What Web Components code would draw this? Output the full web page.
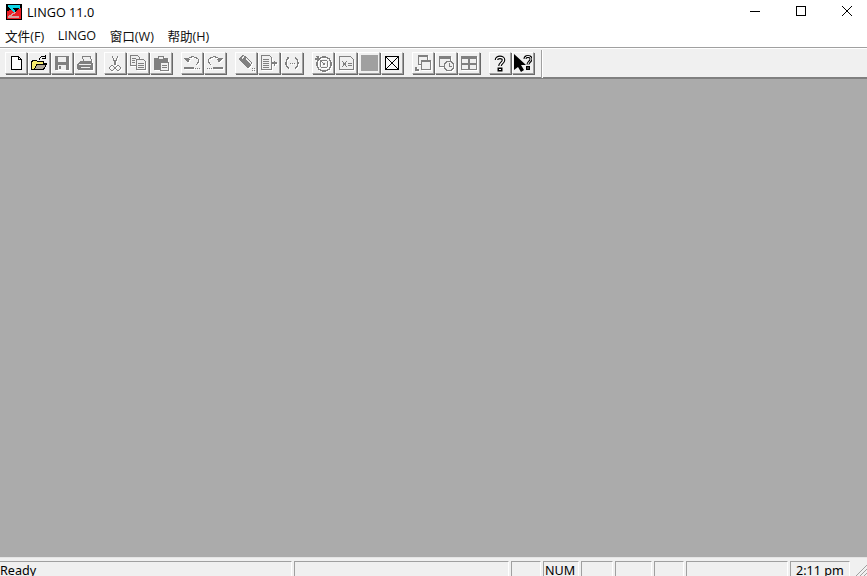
<!DOCTYPE html>
<html>
<head>
<meta charset="utf-8">
<title>LINGO 11.0</title>
<style>
html, body { margin: 0; height: 100%; }
body { width: 867px; height: 576px; overflow: hidden; display: flex; flex-direction: column; font-family: "Liberation Sans", "Noto Sans CJK SC", sans-serif; }
</style>
</head>
<body>
<app-titlebar>LINGO 11.0</app-titlebar>
<app-menubar>
  <span>文件(F)</span><span>LINGO</span><span>窗口(W)</span><span>帮助(H)</span>
</app-menubar>
<app-toolbar></app-toolbar>
<app-workspace></app-workspace>
<app-statusbar></app-statusbar>

<script>
const titleTemplate = document.createElement('template');
titleTemplate.innerHTML = `
<style>
:host { display: flex; align-items: center; height: 24px; background: #fff; flex: none; font-family: "Open Sans", "Liberation Sans", sans-serif; font-size: 12.7px; color: #000; }
.logo { width: 16px; height: 16px; margin: 0 5px 0 6px; flex: none; }
.name { flex: 1; }
.win { display: flex; }
.win svg { width: 46px; height: 24px; display: block; }
</style>
<svg class="logo" viewBox="0 0 16 16" shape-rendering="crispEdges">
  <rect width="16" height="16" fill="#000"/>
  <path d="M1 7l4-1 4 2 5-4h1v11H1z" fill="#ec1c24"/>
  <path d="M2 1h11v3H6l3 3-1 1-6-5z" fill="#12d6e6"/>
  <path d="M9 8l1 1-5 3h8v2H2v-2z" fill="#d8a0a0"/>
  <path d="M13 1h1v4h-1z" fill="#12d6e6"/>
</svg>
<span class="name"><slot></slot></span>
<div class="win">
  <svg viewBox="0 0 46 24"><path d="M21 11.5h10" stroke="#000" stroke-width="1" fill="none"/></svg>
  <svg viewBox="0 0 46 24"><rect x="21.5" y="6.5" width="9" height="9" stroke="#000" fill="none"/></svg>
  <svg viewBox="0 0 46 24"><path d="M21 6l10 10M31 6L21 16" stroke="#000" fill="none"/></svg>
</div>`;

class AppTitlebar extends HTMLElement {
  constructor() {
    super();
    this.attachShadow({mode: 'open'}).appendChild(titleTemplate.content.cloneNode(true));
  }
}
customElements.define('app-titlebar', AppTitlebar);

const menuTemplate = document.createElement('template');
menuTemplate.innerHTML = `
<style>
:host { display: flex; align-items: center; gap: 13.5px; height: 23px; padding: 0 5px 0; box-sizing: border-box; background: #fff; flex: none; font-family: "Open Sans", "Noto Sans CJK SC", sans-serif; font-size: 12.6px; color: #111; }
</style>
<slot></slot>`;

class AppMenubar extends HTMLElement {
  constructor() {
    super();
    this.attachShadow({mode: 'open'}).appendChild(menuTemplate.content.cloneNode(true));
  }
}
customElements.define('app-menubar', AppMenubar);

// toolbar icons on an 18x18 box. dim ones get the old embossed disabled look
const G = '#808080';
const L = '#f0f0f0';
const icons = {
  new: {d: `<path d="M4.5 2.5h7l3 3v10h-10zM11.5 2.5v3h3" fill="#fff" stroke="#000"/>`},
  open: {d: `<path d="M1.5 8.5v7h12l3-6h-3v-2h-6l-1-1h-4z" fill="#f6ea6c" stroke="#000"/><path d="M4.5 15.5l2-5h10l-3 5z" fill="#b0a898" stroke="#000"/><path d="M9 6c1-3 3-4 6-3M15 1v3h-3" fill="none" stroke="#000"/>`},
  save: {dim: 1, d: `<path d="M2 2h14v14H2z" fill="${G}"/><path d="M5 3h8v5H5z" fill="${L}"/><path d="M5 11h8v5H5z" fill="${L}"/><path d="M6 12h2v3H6z" fill="${G}"/>`},
  print: {dim: 1, d: `<path d="M6.5 2.5h8l1 5h-8z" fill="${L}" stroke="${G}"/><path d="M1 10l3-3h12l1 3v5l-1 1H2l-1-1z" fill="${G}"/><path d="M3 10h12v1H3zM5 13h9v1H5z" fill="${L}"/>`},
  cut: {dim: 1, d: `<path d="M6 2l4 9M12 2L8 11" stroke="${G}" fill="none"/><circle cx="6" cy="14" r="2.3" fill="none" stroke="${G}"/><circle cx="12" cy="14" r="2.3" fill="none" stroke="${G}"/>`},
  copy: {dim: 1, d: `<path d="M1.5 1.5h7l2 2v8h-9z" fill="${L}" stroke="${G}"/><path d="M7.5 5.5h7l2 2v8h-9z" fill="${L}" stroke="${G}"/><path d="M3 4h4M3 6h3M3 8h3M9 9h6M9 11h6M9 13h6" stroke="${G}"/>`},
  paste: {dim: 1, d: `<path d="M2 4h4V2h6v2h4v12H2z" fill="${G}"/><path d="M7 3h4v2H7z" fill="${L}"/><path d="M8.5 8.5h8v8h-8z" fill="${L}" stroke="${G}"/><path d="M10 11h5M10 13h5" stroke="${G}"/>`},
  undo: {dim: 1, d: `<path d="M4 6C6 2 12 2 15 5 16 7 15 10 13 11" fill="none" stroke="${G}"/><path d="M1 4l6 1-2 4z" fill="${G}"/><path d="M1 13h10v2H1z" fill="${G}"/><path d="M12 14h1M14 14h1M16 14h1" stroke="${G}"/>`},
  redo: {dim: 1, d: `<path d="M14 6C12 2 6 2 3 5 2 7 3 10 5 11" fill="none" stroke="${G}"/><path d="M17 4l-6 1 2 4z" fill="${G}"/><path d="M7 13h10v2H7z" fill="${G}"/><path d="M1 14h1M3 14h1M5 14h1" stroke="${G}"/>`},
  find: {dim: 1, d: `<path d="M1 5l4-4 3 1 7 7-1 3-3 2-7-6z" fill="${G}"/><path d="M4 4l2-2 1 1-2 2zM8 5l1-1 5 5-1 1z" fill="${L}"/><path d="M15 14h1M17 14h1M15 16h1M17 16h1" stroke="${G}"/>`},
  next: {dim: 1, d: `<path d="M1.5 1.5h8l2 2v12h-10z" fill="${L}" stroke="${G}"/><path d="M3 5h6M3 7h6M3 9h6M3 11h6M3 13h6" stroke="${G}"/><path d="M12 9h5M14.5 6.5v5" stroke="${G}" stroke-width="1.4"/>`},
  match: {dim: 1, d: `<path d="M6 3C2 6 2 12 6 15M12 3c4 3 4 9 0 12" fill="none" stroke="${G}" stroke-width="1.3"/><path d="M7 9h1M9 9h1M11 9h1" stroke="${G}"/>`},
  solve: {dim: 1, d: `<circle cx="10" cy="10" r="7.2" fill="none" stroke="${G}" stroke-width="1.3"/><circle cx="10" cy="10" r="4" fill="none" stroke="${G}"/><circle cx="10" cy="10" r="1.5" fill="${G}"/><path d="M2 2l7 7M1 5h3V2" stroke="${G}" fill="none" stroke-width="1.4"/>`},
  matrix: {dim: 1, d: `<path d="M2.5 2.5h11l3 3v10h-14z" fill="${L}" stroke="${G}"/><path d="M5 7l5 6M10 7l-5 6M11 9h4M11 11h4" stroke="${G}" fill="none"/>`},
  stop: {dim: 1, bare: 1, d: `<rect x="1" y="1" width="17" height="16" fill="#a0a0a0"/>`},
  close: {d: `<rect x="2.5" y="2.5" width="13" height="13" fill="#f8f8f8" stroke="#000"/><path d="M3 3l12 12M15 3L3 15" stroke="#000" fill="none"/>`},
  cascade: {dim: 1, d: `<path d="M4.5 1.5h9v9h-9z" fill="${L}" stroke="${G}"/><path d="M4 1h10v2H4z" fill="${G}"/><path d="M7.5 6.5h9v9h-9z" fill="${L}" stroke="${G}"/><path d="M7 6h10v2H7z" fill="${G}"/><path d="M1 13h2v2h2v2H1z" fill="${G}"/>`},
  tile: {dim: 1, d: `<path d="M2.5 2.5h11v10h-11z" fill="${L}" stroke="${G}"/><path d="M2 2h12v3H2z" fill="${G}"/><circle cx="12" cy="12" r="4.6" fill="${L}" stroke="${G}" stroke-width="1.3"/><path d="M12 9v3h3" stroke="${G}" fill="none"/>`},
  arrange: {dim: 1, d: `<path d="M1 2h16v14H1z" fill="${G}"/><path d="M2 5h6v4H2zM10 5h6v4h-6zM2 11h6v4H2zM10 11h6v4h-6z" fill="${L}"/>`},
  help: {soft: 1, d: `<path d="M5.5 6C5.5 2.5 12.5 2.5 12.5 6 12.5 9 9 9 9 12" fill="none" stroke="#000" stroke-width="3.6"/><path d="M5.5 6C5.5 2.5 12.5 2.5 12.5 6 12.5 9 9 9 9 12" fill="none" stroke="#fff" stroke-width="1.4"/><rect x="6.5" y="13.5" width="5" height="4" fill="#000"/><rect x="8" y="15" width="2" height="1" fill="#fff"/>`},
  helpcur: {soft: 1, d: `<path d="M0 0v16l4-3 3 5 3-2-3-5h5z" fill="#000"/><path d="M11 5C11 1.5 17 1.5 17 5 17 7.5 14 8 14 10.5" fill="none" stroke="#000" stroke-width="3"/><path d="M11 5C11 1.5 17 1.5 17 5 17 7.5 14 8 14 10.5" fill="none" stroke="#fff" stroke-width="1"/><rect x="12" y="12" width="4" height="4" fill="#000"/><rect x="13.5" y="13.5" width="1" height="1" fill="#fff"/>`}
};

const toolGroups = [
  ['new', 'open', 'save', 'print'],
  ['cut', 'copy', 'paste'],
  ['undo', 'redo'],
  ['find', 'next', 'match'],
  ['solve', 'matrix', 'stop', 'close'],
  ['cascade', 'tile', 'arrange'],
  ['help', 'helpcur']
];

const toolbarTemplate = document.createElement('template');
toolbarTemplate.innerHTML = `
<style>
:host { display: flex; align-items: flex-start; height: 32px; box-sizing: border-box; flex: none; background: #f0f0f0; border-top: 1px solid #a0a0a0; border-bottom: 2px solid #808080; padding: 4px 0 0 5px; box-shadow: inset 0 1px 0 #fff; }
.groups { display: flex; gap: 9px; }
.group { display: flex; gap: 1px; }
.group:first-child { margin-right: -1px; }
.sep { width: 1px; height: 28px; margin: -2px 0 0 7px; background: #a0a0a0; border-right: 1px solid #fff; }
</style>
<div class="groups"></div>
<div class="sep"></div>`;

class ToolButton extends HTMLElement {
  connectedCallback() {
    if (this.shadowRoot) return;
    const icon = icons[this.getAttribute('icon')];
    const root = this.attachShadow({mode: 'open'});
    root.innerHTML = `
<style>
:host { display: flex; align-items: center; justify-content: center; width: 22px; height: 22px; box-sizing: border-box; background: #f0f0f0; border-top: 1px solid #fff; border-left: 1px solid #fff; border-right: 1px solid #a0a0a0; border-bottom: 1px solid #a0a0a0; box-shadow: 1px 1px 0 #696969; }
svg { width: 18px; height: 18px; display: block; flex: none; }
.dim { filter: drop-shadow(1px 1px 0 #fff); }
</style>
<svg class="${icon.dim && !icon.bare ? 'dim' : ''}" viewBox="0 0 18 18" ${icon.soft ? '' : 'shape-rendering="crispEdges"'}>${icon.d}</svg>`;
  }
}
customElements.define('tool-button', ToolButton);

class AppToolbar extends HTMLElement {
  constructor() {
    super();
    const root = this.attachShadow({mode: 'open'});
    root.appendChild(toolbarTemplate.content.cloneNode(true));
    const groups = root.querySelector('.groups');
    toolGroups.forEach((names) => {
      const group = document.createElement('div');
      group.className = 'group';
      names.forEach((name) => {
        const btn = document.createElement('tool-button');
        btn.setAttribute('icon', name);
        group.appendChild(btn);
      });
      groups.appendChild(group);
    });
  }
}
customElements.define('app-toolbar', AppToolbar);

class AppWorkspace extends HTMLElement {
  constructor() {
    super();
    this.attachShadow({mode: 'open'}).innerHTML = `
<style>:host { display: block; flex: 1; background: #ababab; }</style>`;
  }
}
customElements.define('app-workspace', AppWorkspace);

const statusPanes = [
  {w: 292, text: 'Ready', flat: true},
  {w: 215}, {w: 30}, {w: 36, text: 'NUM'}, {w: 32}, {w: 37}, {w: 30}, {w: 102},
  {w: 60, text: '2:11 pm', pad: 5}
];

class AppStatusbar extends HTMLElement {
  constructor() {
    super();
    const root = this.attachShadow({mode: 'open'});
    const panes = statusPanes.map((p) =>
      `<div class="pane${p.flat ? ' flat' : ''}" style="width:${p.w}px;padding-left:${p.pad || 1}px">${p.text || ''}</div>`).join('');
    root.innerHTML = `
<style>
:host { display: flex; gap: 2px; height: 19px; box-sizing: border-box; flex: none; background: #f0f0f0; padding-top: 3px; border-top: 1px solid #e4e4e4; font-family: "Noto Sans", "Liberation Sans", sans-serif; font-size: 12.6px; color: #000; overflow: hidden; position: relative; }
.pane { box-sizing: border-box; height: 18px; line-height: 17px; border-top: 1px solid #a0a0a0; border-left: 1px solid #a0a0a0; border-right: 1px solid #fff; white-space: nowrap; flex: none; }
.pane.flat { border-left: 0; padding-left: 0 !important; }
.grip { position: absolute; right: 0; bottom: 0; width: 14px; height: 14px; }
</style>
${panes}
<svg class="grip" viewBox="0 0 14 14"><path d="M3 14L14 3M7 14l7-7M11 14l3-3" stroke="#a0a0a0" fill="none"/></svg>`;
  }
}
customElements.define('app-statusbar', AppStatusbar);
</script>
</body>
</html>
